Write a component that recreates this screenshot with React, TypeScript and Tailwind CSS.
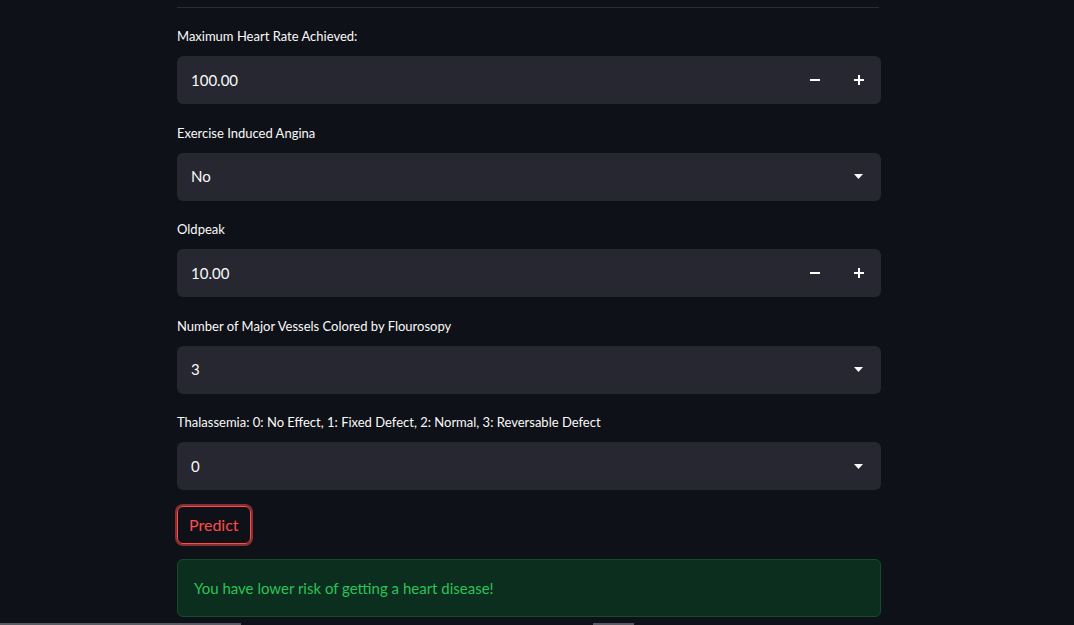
const font = { fontFamily: '"Lato", "Noto Sans", sans-serif' }

function Label({ text }: { text: string }) {
    return <div className="h-5 mb-[10px] text-[13px] leading-5 text-[#fafafa]">{text}</div>
}

function NumberField({ label, value }: { label: string; value: string }) {
    return (
        <div>
            <Label text={label} />
            <div className="flex h-12 rounded-md bg-[#262730] overflow-hidden">
                <div className="flex-1 flex items-center pl-[14px] text-[15px] text-[#fafafa]">{value}</div>
                <button className="w-11 h-full flex items-center justify-center text-white">
                    <span className="block w-[10px] h-[2px] bg-white" />
                </button>
                <button className="w-11 h-full flex items-center justify-center text-white">
                    <span className="relative block w-[10px] h-[10px]">
                        <span className="absolute left-0 top-[4px] w-[10px] h-[2px] bg-white" />
                        <span className="absolute top-0 left-[4px] w-[2px] h-[10px] bg-white" />
                    </span>
                </button>
            </div>
        </div>
    )
}

function SelectField({ label, value }: { label: string; value: string }) {
    return (
        <div>
            <Label text={label} />
            <div className="flex h-12 items-center rounded-md bg-[#262730] pl-[14px] pr-[18px]">
                <div className="flex-1 text-[15px] text-[#fafafa]">{value}</div>
                <svg width="9" height="5" viewBox="0 0 9 5">
                    <path d="M0 0h9L4.5 5z" fill="#fafafa" />
                </svg>
            </div>
        </div>
    )
}

export default function App() {
    return (
        <div className="relative h-[625px] overflow-hidden bg-[#0e1117]" style={font}>
            <div className="ml-[177px] w-[704px] pt-[7px]">
                <div className="h-px w-[702px] bg-[#2b2d36]" />
                <div className="mt-[18px] flex flex-col gap-[18.5px]">
                    <NumberField label="Maximum Heart Rate Achieved:" value="100.00" />
                    <SelectField label="Exercise Induced Angina" value="No" />
                    <NumberField label="Oldpeak" value="10.00" />
                    <SelectField label="Number of Major Vessels Colored by Flourosopy" value="3" />
                    <SelectField label="Thalassemia: 0: No Effect, 1: Fixed Defect, 2: Normal, 3: Reversable Defect" value="0" />
                </div>
                <button className="mt-4 h-[38px] px-[11px] rounded-md border border-[#ff4b4b] text-[16px] text-[#ff4b4b] bg-transparent shadow-[0_0_0_2px_rgba(255,75,75,0.5)]">
                    Predict
                </button>
                <div className="mt-[15px] h-[58px] flex items-center px-4 rounded-md bg-[#0c2e1e] border border-[#174a2c] text-[15px] text-[#2bc35a]">
                    You have lower risk of getting a heart disease!
                </div>
            </div>
            <div className="absolute left-0 bottom-0 h-[2px] w-[241px] bg-[#5a5c63]" />
            <div className="absolute left-[593px] bottom-0 h-[2px] w-[41px] bg-[#5a5c63]" />
        </div>
    )
}
